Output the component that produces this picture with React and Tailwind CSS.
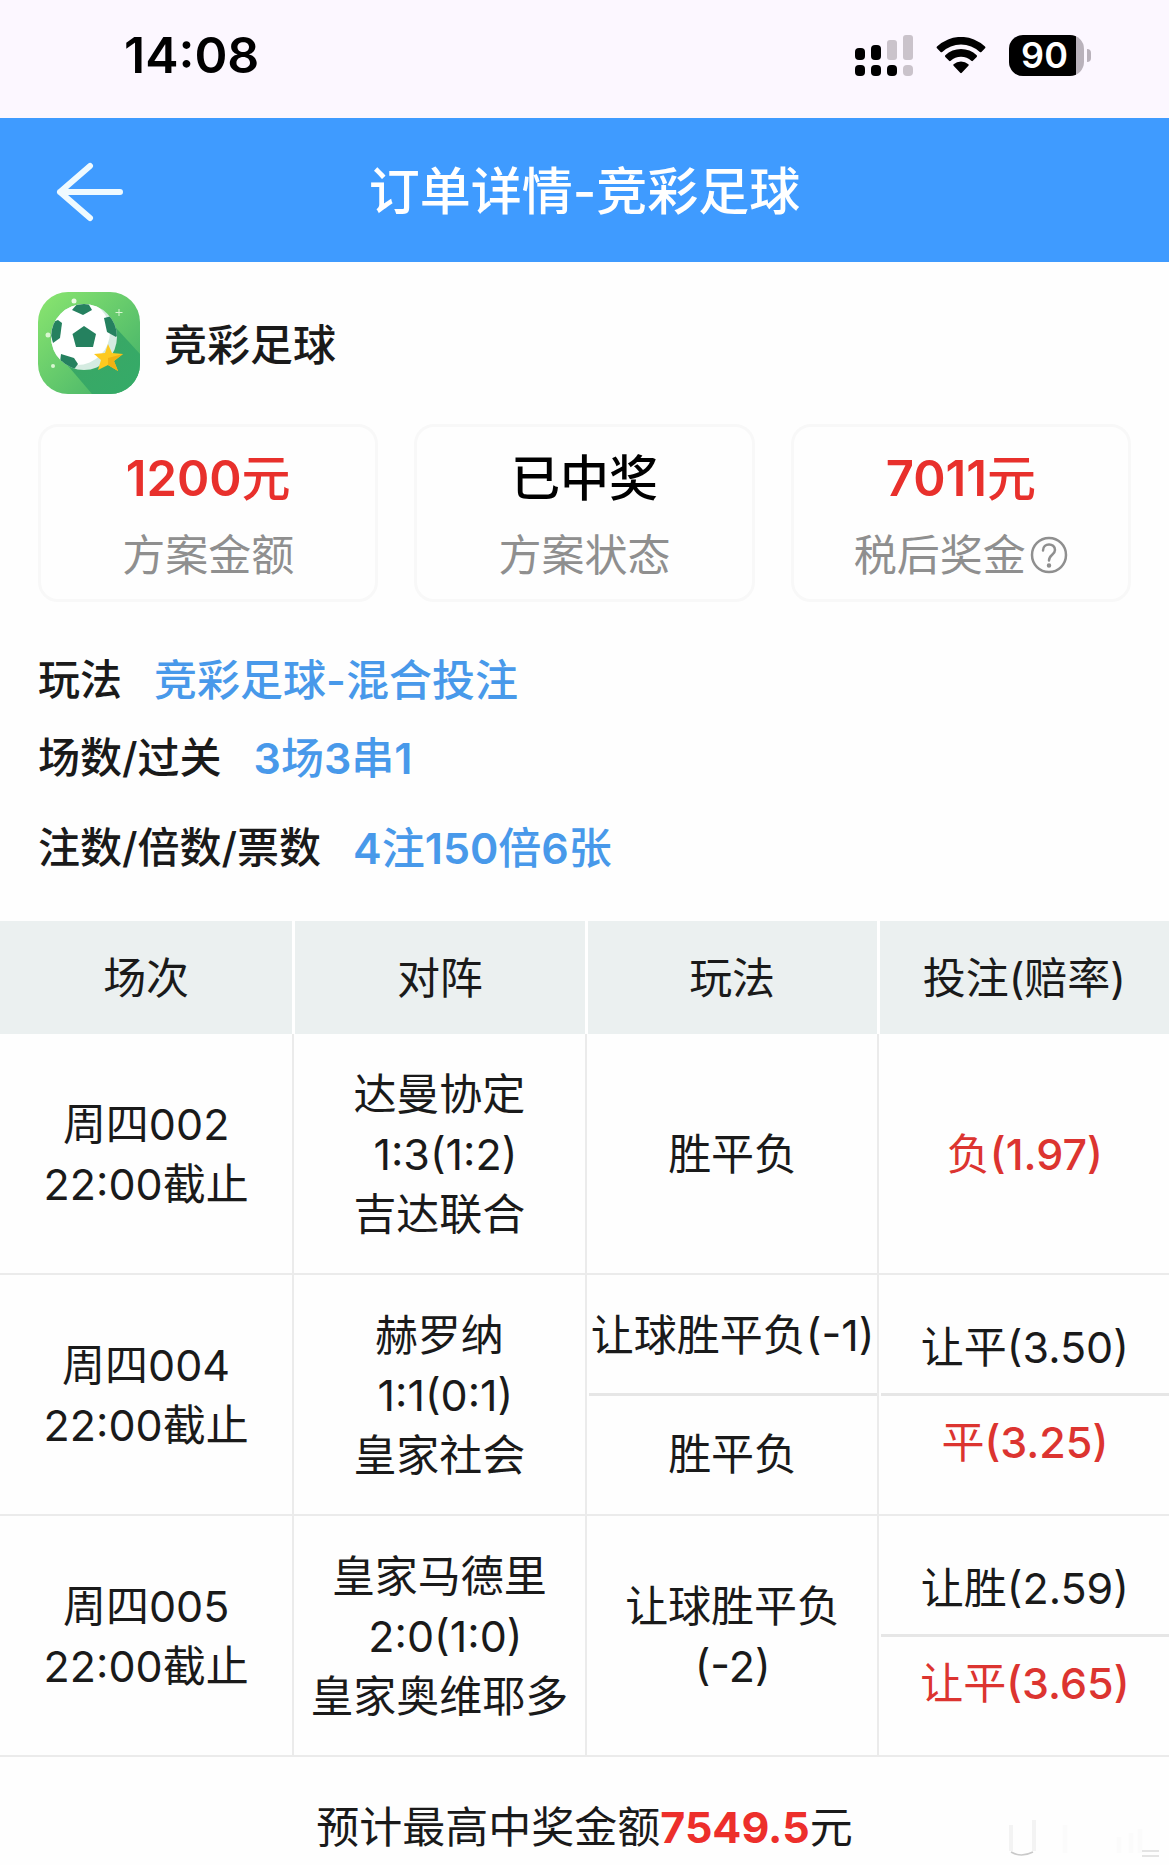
import React from "react";

const stats = [
  { value: "1200元", label: "方案金额", color: "text-[#e8302c]" },
  { value: "已中奖", label: "方案状态", color: "text-black" },
  { value: "7011元", label: "税后奖金", color: "text-[#e8302c]", help: true },
];

const matches = [
  {
    no: "周四002",
    deadline: "22:00截止",
    home: "达曼协定",
    score: "1:3(1:2)",
    away: "吉达联合",
    plays: ["胜平负"],
    bets: [{ text: "负(1.97)", win: true }],
  },
  {
    no: "周四004",
    deadline: "22:00截止",
    home: "赫罗纳",
    score: "1:1(0:1)",
    away: "皇家社会",
    plays: ["让球胜平负(-1)", "胜平负"],
    bets: [{ text: "让平(3.50)" }, { text: "平(3.25)", win: true }],
  },
  {
    no: "周四005",
    deadline: "22:00截止",
    home: "皇家马德里",
    score: "2:0(1:0)",
    away: "皇家奥维耶多",
    plays: ["让球胜平负 (-2)"],
    bets: [{ text: "让胜(2.59)" }, { text: "让平(3.65)", win: true }],
  },
];

// Numbers are set one step heavier than the Chinese text around them
const Mixed = ({ text, numberClass }) =>
  text.split(/([0-9.()]+)/).filter(Boolean).map((part, i) =>
    /[0-9]/.test(part) ? (
      <span key={i} className={numberClass}>{part}</span>
    ) : (
      part
    )
  );

const SignalIcon = () => (
  <svg width="58" height="41" viewBox="0 0 58 41">
    <rect x="0" y="13" width="10" height="12" rx="4" />
    <rect x="16" y="10" width="10" height="15" rx="4" />
    <rect x="32" y="5" width="10" height="20" rx="3" fill="#cac3cb" />
    <rect x="48" y="0" width="10" height="25" rx="3" fill="#cac3cb" />
    <rect x="0" y="30" width="10" height="11" rx="4" />
    <rect x="16" y="30" width="10" height="11" rx="4" />
    <rect x="32" y="30" width="10" height="11" rx="4" />
    <rect x="48" y="30" width="10" height="11" rx="4" fill="#cac3cb" />
  </svg>
);

const WifiIcon = () => (
  <svg width="50" height="37" viewBox="0 0 50 37">
    <path d="M1 9.600A34.500 34.500 0 0 1 49 9.600Q49.800 10.400 49 11.200L45.400 15Q44.600 15.700 43.800 15A27.500 27.500 0 0 0 6.200 15Q5.400 15.700 4.600 15L1 11.200Q.2 10.400 1 9.600Z" />
    <path d="M9.300 18.300A22.600 22.600 0 0 1 40.700 18.300Q41.500 19.100 40.700 19.900L36.900 23.800Q36.100 24.500 35.300 23.800A15 15 0 0 0 14.700 23.800Q13.900 24.500 13.100 23.800L9.300 19.900Q8.500 19.100 9.300 18.300Z" />
    <path d="M17.600 27.200A11.400 11.400 0 0 1 32.400 27.200Q33.200 28 32.400 28.800L25.800 35.800Q25 36.600 24.200 35.800L17.600 28.800Q16.800 28 17.600 27.200Z" />
  </svg>
);

const FootballLogo = () => (
  <svg className="h-[102px] w-[102px] shrink-0" viewBox="0 0 102 102">
    <defs>
      <linearGradient id="tile" x1="0" y1="0" x2="1" y2="1">
        <stop offset="0" stopColor="#8be66f" />
        <stop offset="1" stopColor="#3fae69" />
      </linearGradient>
      <linearGradient id="shade" x1="0" y1="0" x2="1" y2="1">
        <stop offset="0" stopColor="#3da564" />
        <stop offset="1" stopColor="#34ab68" />
      </linearGradient>
      <clipPath id="tileClip">
        <rect width="102" height="102" rx="30" />
      </clipPath>
      <clipPath id="ballClip">
        <circle cx="46" cy="45" r="33" />
      </clipPath>
    </defs>
    <g clipPath="url(#tileClip)">
      <rect width="102" height="102" fill="url(#tile)" />
      <path d="M68 25L102 62V102H54L25 68Z" fill="url(#shade)" />
      <circle cx="46" cy="45" r="33" fill="#d5ebe1" />
      <g clipPath="url(#ballClip)">
        <circle cx="39" cy="40" r="33" fill="#fff" />
        <path d="M46 34L58 42L55 55H38L34.500 42Z" fill="#25815f" />
        <path d="M34 18L40 11H50L54 18L45 23Z" fill="#25815f" />
        <path d="M10 32L20 28L24 31L22 46L15 51Z" fill="#25815f" />
        <path d="M66 26L74 24L82 40L78 45L69 40Z" fill="#25815f" />
        <path d="M23 62L36 66L40 72L34 80L22 70Z" fill="#25815f" />
      </g>
      <path d="M70 52L74 61L85 62L76 69L80 79L70 73L60 78L63 68L56 62L67 61Z" fill="#fdc91f" />
      <path d="M70 66L85 62L76 69L80 79L70 73Z" fill="#f0b213" />
      <circle cx="36" cy="9" r="2.500" fill="#e9fbe2" />
      <circle cx="10" cy="43" r="2.500" fill="#d9f6d1" />
      <circle cx="15" cy="74" r="2" fill="#d9f6d1" />
      <path d="M81 17V24M77.500 20.500H84.500" stroke="#d9f6d1" strokeWidth="1" />
    </g>
  </svg>
);

const StatusBar = () => (
  <div className="flex h-[118px] items-center justify-between bg-[#fcf7ff] pt-1 pb-3 pr-[78px] pl-[124px]">
    <span className="text-[50px] leading-[60px] font-semibold text-black">14:08</span>
    <div className="flex items-center gap-[23px]">
      <SignalIcon />
      <WifiIcon />
      <div className="flex items-center gap-[3px]">
        <div className="flex h-[41px] w-[75px] items-center justify-center rounded-[14px] bg-linear-to-r from-black from-90% to-[#b9b2bb] to-90% pr-1">
          <span className="text-[36px] leading-[41px] font-semibold text-white">90</span>
        </div>
        <div className="h-[13px] w-1 rounded-r-full bg-[#b9b2bb]" />
      </div>
    </div>
  </div>
);

const Header = () => (
  <header className="grid h-36 grid-cols-[1fr_auto_1fr] items-center bg-[#3f9bff] px-14 pt-1 text-white">
    <button type="button" aria-label="返回" className="w-[68px]">
      <svg width="68" height="64" viewBox="0 0 68 64" fill="none" stroke="#effaff" strokeWidth="6" strokeLinecap="round" strokeLinejoin="round">
        <path d="M34 6L4 32L34 58M4 32H64" />
      </svg>
    </button>
    <h1 className="text-[51px] leading-[60px] font-medium">订单详情-竞彩足球</h1>
  </header>
);

const InfoRow = ({ label, value }) => (
  <div className="flex gap-8 leading-[60px] font-medium">
    <dt className="text-[42px]">{label}</dt>
    <dd className="text-[43px] text-[#4899ea]">
      <Mixed text={value} numberClass="font-semibold" />
    </dd>
  </div>
);

const App = () => {
  return (
    <div className="min-h-screen overflow-x-hidden bg-[#fefefe] font-['Inter','Noto_Sans_CJK_SC',sans-serif] text-[#1a1a1a]">
      <StatusBar />
      <Header />

      <main>
        <div className="flex items-center gap-6 px-[38px] pt-[30px]">
          <FootballLogo />
          <h2 className="pt-1 text-[43px] leading-[60px] font-medium">竞彩足球</h2>
        </div>

        {/* Amount, state and prize */}
        <div className="grid grid-cols-3 gap-9 px-[38px] pt-[30px]">
          {stats.map((item) => (
            <div key={item.label} className="rounded-[20px] border-3 border-[#f8f8f8] pt-5 pb-3.5 text-center">
              <p className={`text-[49px] leading-[64px] font-medium ${item.color}`}>
                <Mixed text={item.value} numberClass="font-semibold" />
              </p>
              <p className="mt-3.5 flex items-center justify-center gap-1 text-[43px] leading-[60px] text-[#8f8f8f]">
                {item.label}
                {item.help && (
                  <button type="button" aria-label="说明">
                    <svg width="38" height="38" viewBox="0 0 38 38" fill="none" stroke="#8f8f8f" strokeWidth="2.500" strokeLinecap="round">
                      <circle cx="19" cy="19" r="17" />
                      <path d="M13 14.500C13 6.500 25 6.500 25 14C25 19 19 18.500 19 24.500" />
                      <circle cx="19" cy="29.500" r="1" fill="#8f8f8f" />
                    </svg>
                  </button>
                )}
              </p>
            </div>
          ))}
        </div>

        <dl className="px-[38px] pt-12">
          <InfoRow label="玩法" value="竞彩足球-混合投注" />
          <div className="pt-[18px] pb-[30px]">
            <InfoRow label="场数/过关" value="3场3串1" />
          </div>
          <InfoRow label="注数/倍数/票数" value="4注150倍6张" />
        </dl>

        <table className="mt-[43px] w-full table-fixed border-separate border-spacing-0 text-center text-[43px] leading-[60px]">
          <thead>
            <tr className="h-[113px] bg-[#ebf0f0]">
              <th className="p-0 font-normal">场次</th>
              <th className="border-l-3 border-white p-0 font-normal">对阵</th>
              <th className="border-l-3 border-white p-0 font-normal">玩法</th>
              <th className="border-l-3 border-white p-0 font-normal">投注(赔率)</th>
            </tr>
          </thead>
          <tbody>
            {matches.map((match) => (
              <tr key={match.no} className="h-[241px]">
                <td className="border-b-2 border-[#ebebeb] p-0">
                  <p>{match.no}</p>
                  <p>{match.deadline}</p>
                </td>
                <td className="border-b-2 border-l-2 border-[#ebebeb] p-0">
                  <p>{match.home}</p>
                  <p>&nbsp;{match.score}</p>
                  <p>{match.away}</p>
                </td>
                <td className="border-b-2 border-l-2 border-[#ebebeb] p-0 pl-0.5">
                  <div className="divide-y-3 divide-[#e6e6e6]">
                    {match.plays.map((play) => (
                      <p key={play} className={match.plays.length > 1 ? "py-7 whitespace-nowrap" : "px-8"}>
                        {play}
                      </p>
                    ))}
                  </div>
                </td>
                <td className="border-b-2 border-l-2 border-[#ebebeb] p-0 pl-0.5">
                  <div className="divide-y-3 divide-[#e6e6e6]">
                    {match.bets.map((bet) => (
                      <p key={bet.text} className={bet.win ? "py-4 text-[#dc3430]" : "py-4"}>
                        <Mixed text={bet.text} numberClass={bet.win ? "font-medium" : "font-normal"} />
                      </p>
                    ))}
                  </div>
                </td>
              </tr>
            ))}
          </tbody>
        </table>

        <div className="relative pt-10 pb-2">
          <p className="text-center text-[43px] leading-[60px]">
            预计最高中奖金额<strong className="font-bold text-[#ed2f2b]">7549.5</strong>元
          </p>
          {/* Faint stamp in the corner */}
          <svg className="absolute right-2 bottom-2 h-[38px] w-[152px]" viewBox="0 0 152 38" fill="none" aria-hidden="true">
            <path d="M2 6V32M25 1V32" stroke="#f3f3f3" strokeWidth="4" />
            <path d="M2 33Q12 39 24 33" stroke="#c9c9c9" strokeWidth="1.500" />
            <path d="M56 6V34M110 18V34M122 14V34M131 10V34" stroke="#fbfbfb" strokeWidth="5" />
            <path d="M133 32H150M133 37H150" stroke="#dcdcdc" strokeWidth="1.500" />
          </svg>
        </div>
      </main>
    </div>
  );
};

export default App;
